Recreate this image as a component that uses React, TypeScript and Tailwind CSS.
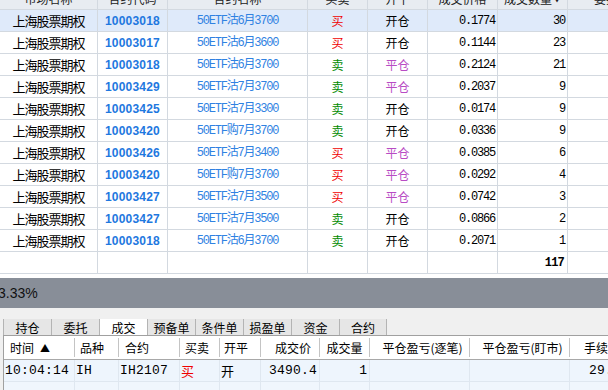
const trades = [
  ["10003018", "50ETF沽6月3700", "买", "开仓", "0.1774", "30"],
  ["10003017", "50ETF沽6月3600", "买", "开仓", "0.1144", "23"],
  ["10003018", "50ETF沽6月3700", "卖", "平仓", "0.2124", "21"],
  ["10003429", "50ETF沽7月3700", "卖", "平仓", "0.2037", "9"],
  ["10003425", "50ETF沽7月3300", "卖", "开仓", "0.0174", "9"],
  ["10003420", "50ETF购7月3700", "卖", "开仓", "0.0336", "9"],
  ["10003426", "50ETF沽7月3400", "买", "平仓", "0.0385", "6"],
  ["10003420", "50ETF购7月3700", "买", "平仓", "0.0292", "4"],
  ["10003427", "50ETF沽7月3500", "买", "平仓", "0.0742", "3"],
  ["10003427", "50ETF沽7月3500", "卖", "开仓", "0.0866", "2"],
  ["10003018", "50ETF沽6月3700", "卖", "开仓", "0.2071", "1"],
]

const tabs = ["持仓", "委托", "成交", "预备单", "条件单", "损盈单", "资金", "合约"]

const cjk = "font-['Noto_Sans_CJK_SC',sans-serif]"
const mono = "font-['Liberation_Mono','Noto_Sans_CJK_SC',monospace]"

const TopTable = () => {
  return (
    <div className="h-[278px] overflow-hidden bg-white">
      <div className="-mt-[12px]">
        {/* header, mostly scrolled out of view */}
        <div className={`flex h-[22px] border-b border-[#d3d9e0] bg-[#e8ecf1] text-[12px] text-[#222] ${cjk}`}>
          <div className="w-[98px] shrink-0 border-r border-[#d3d9e0] flex items-center justify-center">市场名称</div>
          <div className="w-[70px] shrink-0 border-r border-[#d3d9e0] flex items-center justify-center">合约代码</div>
          <div className="w-[140px] shrink-0 border-r border-[#d3d9e0] flex items-center justify-center">合约名称</div>
          <div className="w-[60px] shrink-0 border-r border-[#d3d9e0] flex items-center justify-center">买卖</div>
          <div className="w-[60px] shrink-0 border-r border-[#d3d9e0] flex items-center justify-center">开平</div>
          <div className="w-[70px] shrink-0 border-r border-[#d3d9e0] flex items-center justify-center">成交价格</div>
          <div className="w-[70px] shrink-0 border-r border-[#d3d9e0] flex items-center justify-center">
            成交数量<span className="text-[8px] ml-[1px]">▼</span>
          </div>
          <div className="w-[100px] shrink-0 flex items-center justify-center">委托时间</div>
        </div>

        {trades.map((t, i) => (
          <div
            key={i}
            className={`flex h-[22px] border-b border-[#d3d9e0] ${i === 0 ? "bg-[#dfeafa]" : "bg-white"}`}
          >
            <div className={`w-[98px] shrink-0 border-r border-[#d3d9e0] flex items-center justify-center text-[13px] tracking-[-1px] text-black ${cjk}`}>
              上海股票期权
            </div>
            <div className="w-[70px] shrink-0 border-r border-[#d3d9e0] flex items-center justify-center text-[12px] font-bold tracking-[0.2px] text-[#1e78e0] font-['Liberation_Sans',sans-serif]">
              {t[0]}
            </div>
            <div className={`w-[140px] shrink-0 border-r border-[#d3d9e0] flex items-center justify-center text-[12px] tracking-[-1.2px] text-[#2f82e2] ${mono}`}>
              {t[1]}
            </div>
            <div
              className={`w-[60px] shrink-0 border-r border-[#d3d9e0] flex items-center justify-center text-[12px] ${cjk} ${
                t[2] === "买" ? "text-[#f00000]" : "text-[#008a00]"
              }`}
            >
              {t[2]}
            </div>
            <div
              className={`w-[60px] shrink-0 border-r border-[#d3d9e0] flex items-center justify-center text-[12px] ${cjk} ${
                t[3] === "平仓" ? "text-[#b84cc4]" : "text-black"
              }`}
            >
              {t[3]}
            </div>
            <div className={`w-[70px] shrink-0 border-r border-[#d3d9e0] flex items-center justify-end pr-[2px] text-[12px] tracking-[-1.2px] text-black ${mono}`}>
              {t[4]}
            </div>
            <div className={`w-[70px] shrink-0 border-r border-[#d3d9e0] flex items-center justify-end pr-[2px] text-[12px] tracking-[-1.2px] text-black ${mono}`}>
              {t[5]}
            </div>
            <div className="w-[100px] shrink-0"></div>
          </div>
        ))}

        {/* total */}
        <div className="flex h-[22px] border-b border-[#d3d9e0] bg-white">
          <div className="w-[98px] shrink-0 border-r border-[#d3d9e0]"></div>
          <div className="w-[70px] shrink-0 border-r border-[#d3d9e0]"></div>
          <div className="w-[140px] shrink-0 border-r border-[#d3d9e0]"></div>
          <div className="w-[60px] shrink-0 border-r border-[#d3d9e0]"></div>
          <div className="w-[60px] shrink-0 border-r border-[#d3d9e0]"></div>
          <div className="w-[70px] shrink-0 border-r border-[#d3d9e0]"></div>
          <div className={`w-[70px] shrink-0 border-r border-[#d3d9e0] flex items-center justify-end pr-[3px] text-[12px] font-bold tracking-[-0.8px] text-black ${mono}`}>
            117
          </div>
          <div className="w-[100px] shrink-0"></div>
        </div>
      </div>
    </div>
  )
}

const BottomPanel = () => {
  return (
    <div className="flex-1 bg-[#f0f0f0] pt-[11px] pl-[3px] overflow-hidden">
      <div className={`flex h-[16px] text-[12px] text-black ${cjk}`}>
        {tabs.map((tab, i) => (
          <div
            key={tab}
            className={`w-[48px] shrink-0 flex items-end justify-center leading-[14px] border-l border-[#b4b4b4] ${
              i === 2 ? "bg-white" : "bg-[#e6e6e6]"
            } ${i === tabs.length - 1 ? "border-r" : ""}`}
          >
            {tab}
          </div>
        ))}
      </div>

      <div className="border-t border-l border-[#a0a0a0] bg-white">
        <div className={`flex h-[24px] py-[2px] border-b border-[#a8a8a8] bg-white text-[12px] text-black ${cjk}`}>
          <div className="w-[71px] shrink-0 border-r border-[#c4c4c4] flex items-center pl-[6px]">
            时间<span className="ml-[6px] text-[10px]">▲</span>
          </div>
          <div className="w-[44px] shrink-0 border-r border-[#c4c4c4] flex items-center pl-[5px]">品种</div>
          <div className="w-[61px] shrink-0 border-r border-[#c4c4c4] flex items-center pl-[6px]">合约</div>
          <div className="w-[40px] shrink-0 border-r border-[#c4c4c4] flex items-center pl-[5px]">买卖</div>
          <div className="w-[41px] shrink-0 border-r border-[#c4c4c4] flex items-center pl-[4px]">开平</div>
          <div className="w-[59px] shrink-0 border-r border-[#c4c4c4] flex items-center justify-end pr-[8px]">成交价</div>
          <div className="w-[50px] shrink-0 border-r border-[#c4c4c4] flex items-center justify-center">成交量</div>
          <div className="w-[100px] shrink-0 border-r border-[#c4c4c4] flex items-center justify-center pl-[6px]">平仓盈亏(逐笔)</div>
          <div className="w-[100px] shrink-0 border-r border-[#c4c4c4] flex items-center justify-center pl-[6px]">平仓盈亏(盯市)</div>
          <div className="w-[60px] shrink-0 flex items-center justify-center pl-[4px]">手续费</div>
        </div>

        <div className="flex h-[22px] border-b border-[#dfe7f0] bg-[#eef5fd] text-black">
          <div className={`w-[71px] shrink-0 border-r border-[#dfe7f0] flex items-center pl-[1px] text-[13px] tracking-[0.2px] ${mono}`}>10:04:14</div>
          <div className={`w-[44px] shrink-0 border-r border-[#dfe7f0] flex items-center pl-[1px] text-[13px] tracking-[0.2px] ${mono}`}>IH</div>
          <div className={`w-[61px] shrink-0 border-r border-[#dfe7f0] flex items-center pl-[1px] text-[13px] tracking-[0.2px] ${mono}`}>IH2107</div>
          <div className={`w-[40px] shrink-0 border-r border-[#dfe7f0] flex items-center pl-[1px] text-[13px] text-[#f00000] ${cjk}`}>买</div>
          <div className={`w-[41px] shrink-0 border-r border-[#dfe7f0] flex items-center pl-[1px] text-[13px] ${cjk}`}>开</div>
          <div className={`w-[59px] shrink-0 border-r border-[#dfe7f0] flex items-center justify-end pr-[2px] text-[13px] tracking-[0.2px] ${mono}`}>3490.4</div>
          <div className={`w-[50px] shrink-0 border-r border-[#dfe7f0] flex items-center justify-end pr-[2px] text-[13px] ${mono}`}>1</div>
          <div className="w-[100px] shrink-0 border-r border-[#dfe7f0]"></div>
          <div className="w-[100px] shrink-0 border-r border-[#dfe7f0]"></div>
          <div className={`w-[60px] shrink-0 flex items-center pl-[19px] text-[13px] tracking-[0.2px] ${mono}`}>29.10</div>
        </div>

        <div className="flex h-[22px] bg-[#f0f6fd]">
          <div className="w-[71px] shrink-0 border-r border-[#dfe7f0]"></div>
          <div className="w-[44px] shrink-0 border-r border-[#dfe7f0]"></div>
          <div className="w-[61px] shrink-0 border-r border-[#dfe7f0]"></div>
          <div className="w-[40px] shrink-0 border-r border-[#dfe7f0]"></div>
          <div className="w-[41px] shrink-0 border-r border-[#dfe7f0]"></div>
          <div className="w-[59px] shrink-0 border-r border-[#dfe7f0]"></div>
          <div className="w-[50px] shrink-0 border-r border-[#dfe7f0]"></div>
          <div className="w-[100px] shrink-0 border-r border-[#dfe7f0]"></div>
          <div className="w-[100px] shrink-0 border-r border-[#dfe7f0]"></div>
          <div className="w-[60px] shrink-0"></div>
        </div>
      </div>
    </div>
  )
}

const App = () => {
  return (
    <div className="w-[608px] h-[390px] overflow-hidden flex flex-col bg-white">
      <TopTable />
      <div className="h-[30px] shrink-0 bg-[#888e98] flex items-center">
        <span className="-ml-[2px] text-[14px] text-[#111] font-['Liberation_Sans',sans-serif]">3.33%</span>
      </div>
      <BottomPanel />
    </div>
  )
}

export default App
